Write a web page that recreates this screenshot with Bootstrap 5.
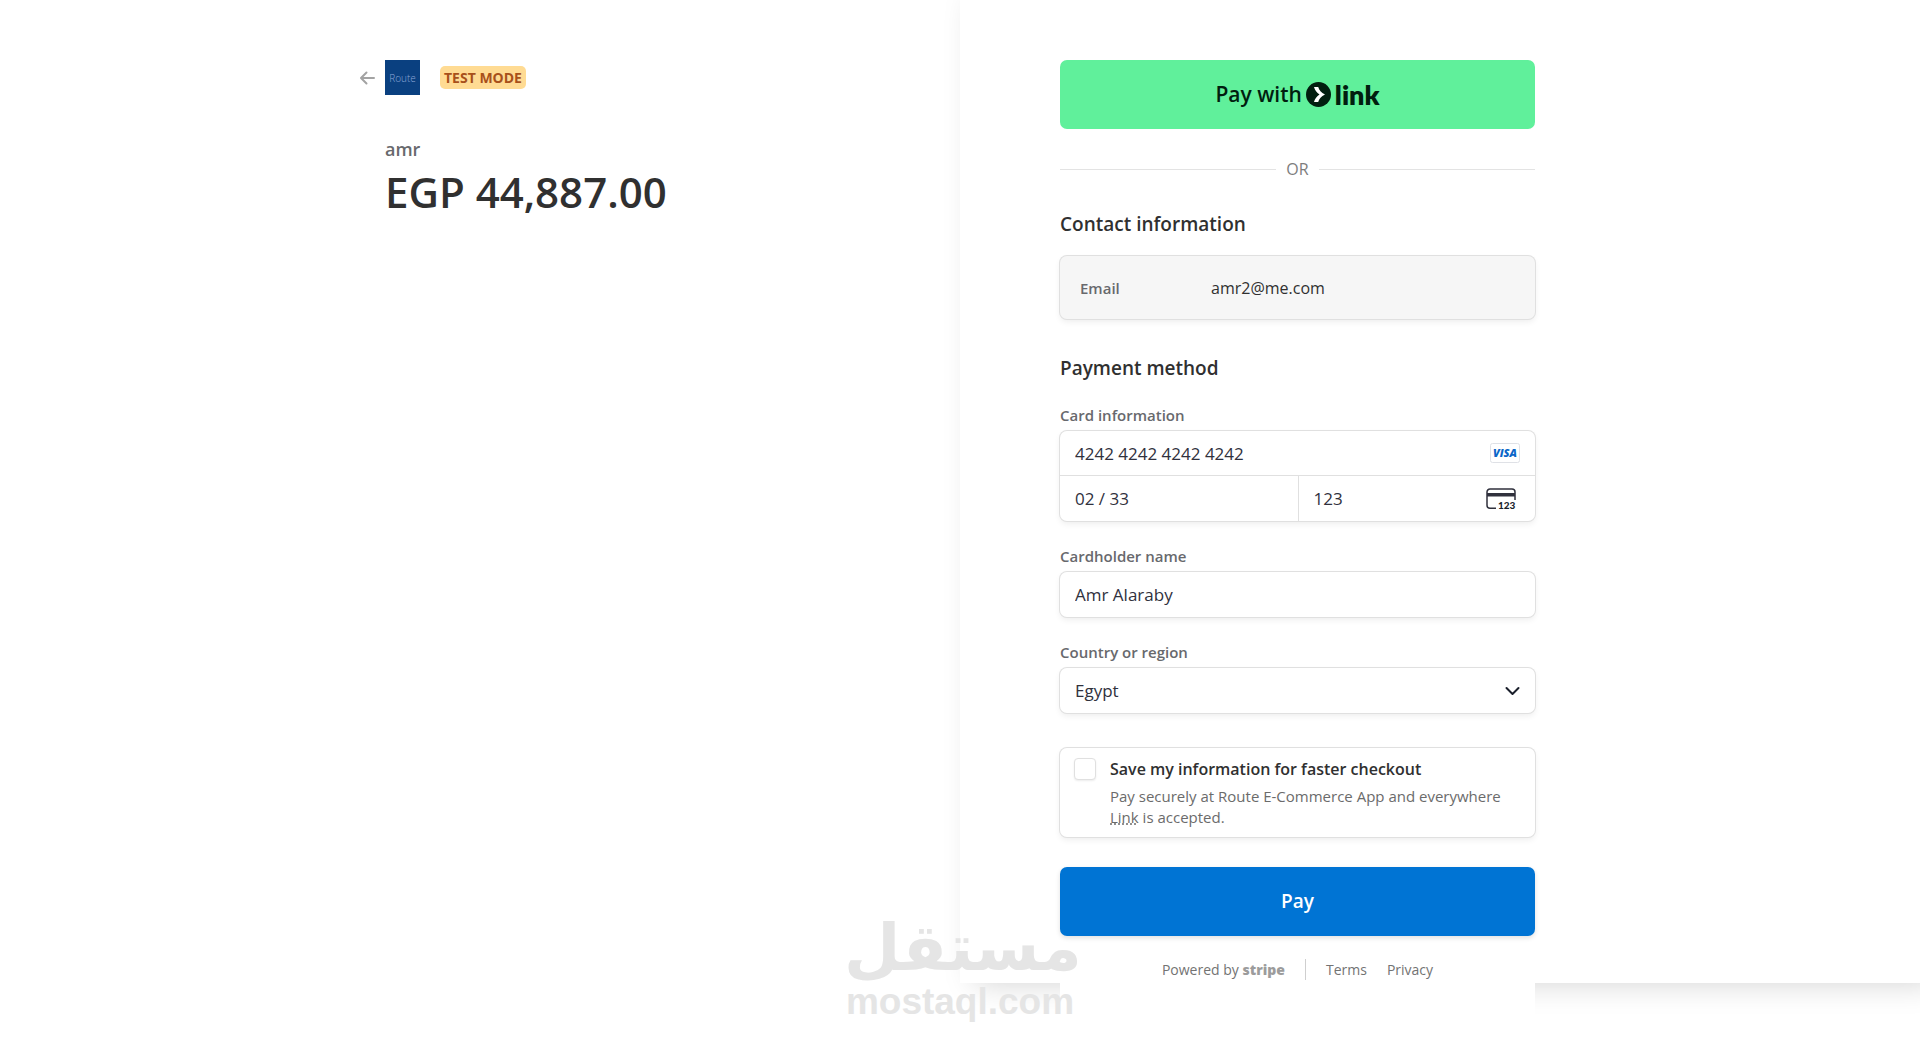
<!DOCTYPE html>
<html lang="en">
<head>
<meta charset="utf-8">
<meta name="viewport" content="width=device-width, initial-scale=1">
<title>Checkout</title>
<link href="https://cdn.jsdelivr.net/npm/bootstrap@5.3.0/dist/css/bootstrap.min.css" rel="stylesheet">
<style>
  :root { --ink: #30313d; --ink-2: #68696d; --line: #e0e0e0; --gutter: 100px; --content: 475px; }
  body { font-family: "Open Sans", "Noto Sans", sans-serif; font-size: 16px; line-height: 24px; color: #303030; background: #fff; }
  .checkout { min-height: 100vh; }
  .side { padding-top: 60px; }
  .summary-side { padding-right: var(--gutter); }
  .form-side { padding-left: var(--gutter); height: calc(100vh - 60px); background: #fff; box-shadow: 15px 0 30px rgba(0, 0, 0, .18); }
  .side-content { width: 100%; max-width: var(--content); background: #fff; }
  .form-side .side-content { padding-bottom: 50px; }

  /* Order summary */
  .back-link { width: 16px; margin-left: -26px; margin-right: 10px; line-height: 0; color: #a3a3a3; }
  .merchant-logo { width: 35px; height: 35px; background: #0a4080; color: #8ba6d6; font-size: 10px; font-weight: 300; }
  .test-tag { margin-left: 20px; padding: 0 4px; line-height: 23px; font-size: 14px; font-weight: 700; color: #a8501a; background: #ffdb93; border-radius: 5px; }
  .product-name { margin: 42px 0 0; font-size: 18px; font-weight: 600; color: var(--ink-2); }
  .product-price { margin: 4px 0 0; font-size: 42px; line-height: 54px; font-weight: 600; color: #303030; }

  /* Buttons */
  .btn-wide { height: 69px; border: 0; border-radius: 7px; }
  .btn-link-pay, .btn-link-pay:hover { background: #60f09b; color: #011e0f; font-size: 21px; font-weight: 600; }
  .link-wordmark { font-family: Lato, "Open Sans", sans-serif; font-size: 27px; font-weight: 800; line-height: 28px; }
  .btn-pay, .btn-pay:hover { margin-top: 30px; background: #0074d4; color: #fff; font-size: 19px; font-weight: 600; box-shadow: 0 2px 5px rgba(0, 0, 0, .12); }

  .or-rule { margin: 28px 0 30px; gap: 10px; color: #7d7d7d; }
  .or-rule::before, .or-rule::after { content: ""; flex: 1; height: 1px; background: #e3e3e3; }

  /* Form */
  .section-title { margin: 0; font-size: 19px; line-height: 26px; font-weight: 600; color: #303030; }
  .section-title + .field-label { margin-top: 24px; }
  .field-label { display: block; margin: 25px 0 6px; padding: 0; font-size: 15px; line-height: 20px; font-weight: 600; color: var(--ink-2); }
  .box { border-radius: 7px; box-shadow: 0 0 0 1px var(--line), 0 3px 6px rgba(0, 0, 0, .07); background: #fff; }
  .email-box { margin: 19px 0 36px; height: 63px; padding: 0 20px; background: #f6f6f6; }
  .email-key { width: 131px; font-size: 15px; font-weight: 600; color: var(--ink-2); }
  .box .form-control, .box .form-select { height: 45px; padding: 0 15px; border: 0; border-radius: 7px; background: transparent; color: var(--ink); font-size: 17px; line-height: 24px; }
  .box .card-row:first-child .form-control { height: 44px; }
  .card-row + .card-row { border-top: 1px solid var(--line); }
  .cvc-cell { border-left: 1px solid var(--line); }
  .field-icon { position: absolute; top: 50%; right: 15px; transform: translateY(-50%); pointer-events: none; line-height: 0; }
  .cvc-cell .field-icon { right: 19px; }
  .save-box { margin-top: 35px; padding: 9px 14px; }
  .save-box .form-check-input { width: 22px; height: 22px; margin: 1px 14px 0 0; flex: none; border: 1px solid var(--line); border-radius: 4px; box-shadow: 0 1px 2px rgba(0, 0, 0, .08); }
  .save-title { display: block; font-weight: 600; line-height: 24px; color: #303030; }
  .save-note { margin: 5px 0 0; font-size: 15px; line-height: 21px; color: #6b6b6b; }
  .save-note a { color: inherit; text-decoration: underline dotted; }

  .pay-footer { margin-top: 23px; font-size: 14px; line-height: 21px; color: #737373; }
  .pay-footer a { color: inherit; text-decoration: none; }
  .pay-footer .terms { margin-left: 20px; padding-left: 20px; border-left: 1px solid #cfcfcf; }
  .stripe-wordmark { font-weight: 800; color: #9c9c9c; }

  /* Watermark over the page */
  .watermark { position: absolute; left: 50%; bottom: 20px; width: 232px; margin-left: -116px; color: #e5e5e5; pointer-events: none; text-align: center; white-space: nowrap; }
  .watermark-ar { font-family: "DejaVu Sans", sans-serif; font-size: 65px; line-height: 66px; font-weight: 700; }
  .watermark-en { font-family: "Liberation Sans", sans-serif; font-size: 37px; line-height: 42px; font-weight: 700; }
</style>
<script src="https://cdn.jsdelivr.net/npm/bootstrap@5.3.0/dist/js/bootstrap.bundle.min.js"></script>
</head>
<body>
<div class="checkout position-relative">
  <div class="row g-0">
    <section class="col-6 side summary-side d-flex justify-content-end">
      <div class="side-content">
        <header class="d-flex align-items-center">
          <a class="back-link" href="#" aria-label="Back">
            <svg width="16" height="14" viewBox="0 0 16 14" fill="none" stroke="currentColor" stroke-width="2" stroke-linecap="round" stroke-linejoin="round"><path d="M15 7H2.500M7.500 1.500 2 7l5.500 5.500"/></svg>
          </a>
          <div class="merchant-logo d-flex align-items-center justify-content-center">Route</div>
          <span class="test-tag">TEST MODE</span>
        </header>
        <p class="product-name">amr</p>
        <p class="product-price">EGP 44,887.00</p>
      </div>
    </section>

    <main class="col-6 side form-side">
      <form class="side-content">
        <button type="button" class="btn btn-wide btn-link-pay w-100 d-flex align-items-center justify-content-center">
          <span>Pay with</span>
          <svg class="mx-1" width="25" height="25" viewBox="0 0 25 25"><circle cx="12.5" cy="12.5" r="12.5" fill="#011e0f"/><path d="M8 5h4.200c.9 3.200 3 5.900 6.800 7.500-3.800 1.600-5.900 4.300-6.800 7.500H8c.8-3.200 2.800-5.600 5.500-7.500C10.800 10.600 8.800 8.200 8 5z" fill="#fff"/></svg>
          <span class="link-wordmark">link</span>
        </button>

        <div class="or-rule d-flex align-items-center">OR</div>

        <h2 class="section-title">Contact information</h2>
        <div class="box email-box d-flex align-items-center">
          <span class="email-key">Email</span>
          <span>amr2@me.com</span>
        </div>

        <h2 class="section-title">Payment method</h2>
        <label class="field-label" for="cardNumber">Card information</label>
        <div class="box">
          <div class="card-row position-relative">
            <input class="form-control" id="cardNumber" type="text" value="4242 4242 4242 4242">
            <span class="field-icon">
              <svg width="30" height="20" viewBox="0 0 30 20"><rect x=".5" y=".5" width="29" height="19" rx="2" fill="#fff" stroke="#dfe1e6"/><text x="15" y="14" text-anchor="middle" font-family="Open Sans" font-weight="800" font-style="italic" font-size="11" fill="#0a66c8">VISA</text></svg>
            </span>
          </div>
          <div class="card-row d-flex">
            <div class="w-50"><input class="form-control" type="text" aria-label="Expiration" value="02 / 33"></div>
            <div class="w-50 cvc-cell position-relative">
              <input class="form-control" type="text" aria-label="CVC" value="123">
              <span class="field-icon">
                <svg width="30" height="22" viewBox="0 0 30 22"><path d="M10 20.200H4A3 3 0 0 1 1 17.200V4a3 3 0 0 1 3-3h22a3 3 0 0 1 3 3v8" fill="none" stroke="#30313d" stroke-width="1.500"/><path d="M1 5h28v3.500H1z" fill="#30313d"/><text x="12" y="21" font-family="Lato" font-weight="900" font-size="10" fill="#1a1f2b">123</text></svg>
              </span>
            </div>
          </div>
        </div>

        <label class="field-label" for="holder">Cardholder name</label>
        <div class="box"><input class="form-control" id="holder" type="text" value="Amr Alaraby"></div>

        <label class="field-label" for="country">Country or region</label>
        <div class="box position-relative">
          <select class="form-select" id="country"><option>Egypt</option></select>
          <span class="field-icon">
            <svg width="15" height="10" viewBox="0 0 15 10" fill="none" stroke="#1a1f2b" stroke-width="2" stroke-linecap="round" stroke-linejoin="round"><path d="M1.500 2l6 6 6-6"/></svg>
          </span>
        </div>

        <div class="box save-box d-flex">
          <input class="form-check-input" id="save" type="checkbox">
          <div>
            <label class="save-title" for="save">Save my information for faster checkout</label>
            <p class="save-note">Pay securely at Route E-Commerce App and everywhere <a href="#">Link</a> is accepted.</p>
          </div>
        </div>

        <button type="submit" class="btn btn-wide btn-pay w-100">Pay</button>

        <footer class="pay-footer d-flex justify-content-center">
          <a href="#">Powered by <span class="stripe-wordmark">stripe</span></a>
          <a class="terms" href="#">Terms</a>
          <a class="ms-3 ps-1" href="#">Privacy</a>
        </footer>
      </form>
    </main>
  </div>
  <div class="watermark" aria-hidden="true">
    <div class="watermark-ar" lang="ar">مستقل</div>
    <div class="watermark-en">mostaql.com</div>
  </div>
</div>
</body>
</html>
